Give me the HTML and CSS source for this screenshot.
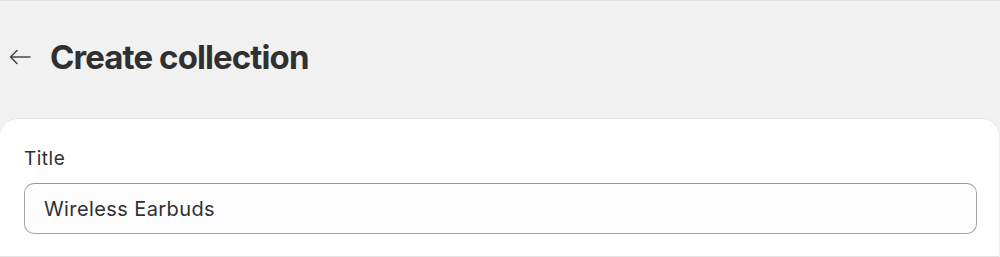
FILE: index.html
```html
<!DOCTYPE html>
<html>
<head>
<meta charset="utf-8">
<link rel="stylesheet" href="styles.css">
</head>
<body>
<div class="page">
  <header class="header">
    <button class="back" aria-label="Back">
      <svg width="24" height="24" viewBox="0 0 24 24" fill="none" stroke="#4a4a4a" stroke-width="1.6" stroke-linecap="round" stroke-linejoin="round">
        <path d="M22 12H2.5M9 5.5L2.5 12 9 18.5"/>
      </svg>
    </button>
    <h1 class="title">Create collection</h1>
  </header>
  <section class="card">
    <label class="label">Title</label>
    <div class="input">Wireless Earbuds</div>
  </section>
</div>
</body>
</html>
```

FILE: styles.css
```css
html, body {
  margin: 0;
  padding: 0;
}
body {
  background: #f1f1f1;
  font-family: Inter, "Liberation Sans", sans-serif;
  color: #303030;
  width: 1000px;
  height: 257px;
  overflow: hidden;
}
.page {
  border-top: 1px solid #e4e4e4;
  height: 256px;
  display: flex;
  flex-direction: column;
}
.header {
  display: flex;
  align-items: center;
  height: 117px;
  box-sizing: border-box;
  padding: 0 0 6px 8px;
  gap: 18px;
}
.back {
  border: 0;
  background: none;
  padding: 0;
  width: 24px;
  height: 24px;
  display: flex;
  align-items: center;
  justify-content: center;
}
.title {
  margin: 0;
  font-size: 33px;
  font-weight: 700;
  letter-spacing: -0.9px;
  color: #303030;
}
.card {
  background: #fff;
  border-radius: 18px 18px 0 0;
  border-top: 1px solid #e6e6e6;
  margin: 0 1px 0 0;
  flex: 1;
  padding: 28px 22px 0 24px;
  border-bottom: 1px solid #e3e3e3;
  box-sizing: border-box;
}
.label {
  display: block;
  font-size: 19px;
  letter-spacing: 0.5px;
  color: #303030;
  line-height: 24px;
  margin-bottom: 12px;
}
.input {
  height: 51px;
  box-sizing: border-box;
  border: 1px solid #a3a3a3;
  border-top-color: #999;
  border-radius: 10px;
  background: #fdfdfd;
  padding: 0 19px;
  display: flex;
  align-items: center;
  font-size: 20px;
  letter-spacing: 0.4px;
  color: #303030;
}
```
